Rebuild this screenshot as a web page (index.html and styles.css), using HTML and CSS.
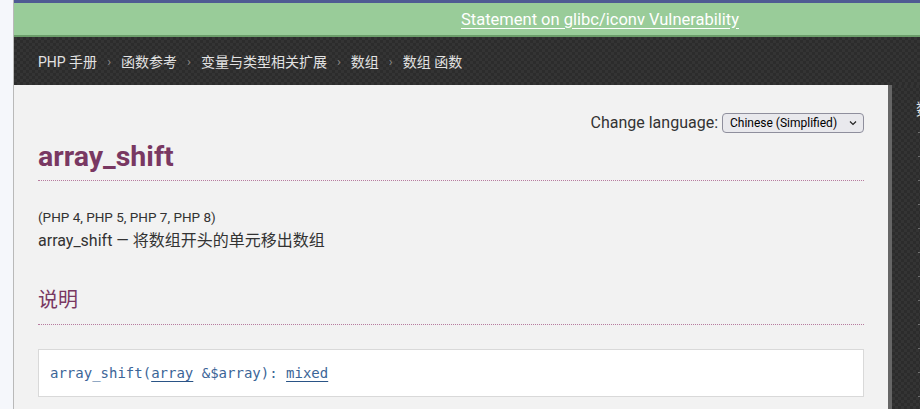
FILE: index.html
```html
<!DOCTYPE html>
<html lang="zh-CN">
<head>
<meta charset="utf-8">
<title>PHP: array_shift - Manual</title>
<link rel="stylesheet" href="styles.css">
</head>
<body>
<div class="strip"></div>
<div class="page">
  <div class="topbar"></div>
  <div class="notice"><a href="#">Statement on glibc/iconv Vulnerability</a></div>
  <nav class="crumbs">
    <a href="#">PHP 手册</a><span class="sep">›</span>
    <a href="#">函数参考</a><span class="sep">›</span>
    <a href="#">变量与类型相关扩展</a><span class="sep">›</span>
    <a href="#">数组</a><span class="sep">›</span>
    <a href="#">数组 函数</a>
  </nav>
  <div class="layout">
    <main class="content">
      <div class="lang">
        <label class="lang-label" for="lang">Change language:</label>
        <span class="select-wrap">
          <select id="lang" class="lang-select">
            <option>English</option>
            <option>German</option>
            <option>Spanish</option>
            <option>French</option>
            <option>Italian</option>
            <option>Japanese</option>
            <option>Brazilian Portuguese</option>
            <option>Russian</option>
            <option>Turkish</option>
            <option>Ukrainian</option>
            <option selected>Chinese (Simplified)</option>
            <option>Other</option>
          </select>
          <svg class="chev" width="8" height="6" viewBox="0 0 8 6"><path d="M1 1.5 L4 4.5 L7 1.5" fill="none" stroke="#222" stroke-width="1.2"/></svg>
        </span>
      </div>
      <h1 class="title">array_shift</h1>
      <p class="verinfo">(PHP 4, PHP 5, PHP 7, PHP 8)</p>
      <p class="refpurpose">array_shift — 将数组开头的单元移出数组</p>
      <h2 class="section">说明</h2>
      <div class="methodsynopsis"><span class="mname">array_shift</span>(<a href="#" class="type">array</a> <span class="param">&amp;$array</span>): <a href="#" class="type">mixed</a></div>
    </main>
    <aside class="sidebar">
      <div class="side-title">数组 函数</div>
      <ul class="side-list">
        <li>array_change_key_case</li>
        <li>array_chunk</li>
        <li>array_column</li>
        <li>array_combine</li>
        <li>array_count_values</li>
        <li>array_diff_assoc</li>
        <li>array_diff_key</li>
        <li>array_diff_uassoc</li>
        <li>array_diff_ukey</li>
        <li>array_diff</li>
        <li>array_fill_keys</li>
        <li>array_fill</li>
        <li>array_filter</li>
      </ul>
    </aside>
  </div>
</div>
</body>
</html>
```
FILE: styles.css
```css
* { box-sizing: border-box; }

html, body {
  margin: 0;
  padding: 0;
}

body {
  width: 920px;
  height: 409px;
  overflow: hidden;
  display: flex;
  background: #f2f2f2;
  font-family: Roboto, "Noto Sans CJK SC", sans-serif;
  color: #333;
}

.strip {
  flex: 0 0 14px;
  background: #f5f7fb;
  border-right: 1px solid #b9b9b9;
}

.page {
  flex: 0 0 906px;
  display: flex;
  flex-direction: column;
  overflow: hidden;
}

.topbar {
  height: 3px;
  background: #4f5b93;
}

.notice {
  height: 34px;
  background: #99cc99;
  border-bottom: 2px solid #6b9d6a;
  display: flex;
  justify-content: center;
  align-items: center;
  padding-left: 266px;
  font-size: 16.5px;
}

.notice a {
  color: #fff;
  text-decoration: underline;
  text-underline-offset: 3px;
}

.crumbs {
  height: 48px;
  display: flex;
  align-items: center;
  padding-left: 24px;
  font-size: 14px;
  background: conic-gradient(#2c2c2c 25%, #343434 0 50%, #2c2c2c 0 75%, #343434 0) 0 0 / 6px 6px;
}

.crumbs a {
  color: #e2e2e2;
  text-decoration: none;
}

.crumbs .sep {
  color: #8a8a8a;
  font-size: 13px;
  padding: 0 10px;
}

.layout {
  flex: 1;
  display: flex;
  min-height: 0;
}

.content {
  flex: 0 0 878px;
  background: #f2f2f2;
  border-right: 4px solid #666;
  padding: 28px 24px 0;
}

.lang {
  display: flex;
  justify-content: flex-end;
  align-items: center;
  gap: 4px;
  height: 20px;
}

.lang-label {
  font-size: 16px;
  line-height: 20px;
  color: #333;
}

.select-wrap {
  position: relative;
  display: block;
}

.lang-select {
  appearance: none;
  -webkit-appearance: none;
  display: block;
  width: 142px;
  height: 20px;
  margin: 0;
  padding: 0 0 0 7px;
  font-family: Roboto, sans-serif;
  font-size: 12px;
  color: #000;
  background: #e9e9ed;
  border: 1px solid #8f8f9d;
  border-radius: 4px;
}

.chev {
  position: absolute;
  right: 7px;
  top: 7px;
  pointer-events: none;
}

.title {
  margin: 4px 0 0;
  padding-bottom: 3px;
  font-size: 28.5px;
  line-height: 40px;
  font-weight: bold;
  color: #793862;
  border-bottom: 1px dotted #b77c9f;
}

.verinfo {
  margin: 25px 0 0;
  font-size: 13.5px;
  line-height: 22px;
}

.refpurpose {
  margin: 1px 0 0;
  font-size: 16px;
  line-height: 24px;
}

.section {
  margin: 33px 0 0;
  padding-bottom: 10px;
  font-size: 20px;
  line-height: 28px;
  font-weight: normal;
  color: #793862;
  border-bottom: 1px dotted #b77c9f;
}

.methodsynopsis {
  margin-top: 24px;
  height: 48px;
  padding: 0 11px;
  background: #fff;
  border: 1px solid #d9d9d9;
  font-family: "DejaVu Sans Mono", monospace;
  font-size: 14px;
  line-height: 46px;
  color: #3b6597;
  white-space: nowrap;
}

.methodsynopsis .type {
  color: #3b6597;
  text-decoration: underline;
  text-decoration-color: #2a5486;
  text-underline-offset: 3px;
}

.sidebar {
  flex: 1;
  overflow: hidden;
  white-space: nowrap;
  padding: 13px 0 0 24px;
  color: #e6e6e6;
  background: conic-gradient(#2c2c2c 25%, #343434 0 50%, #2c2c2c 0 75%, #343434 0) 0 0 / 6px 6px;
}

.side-title {
  width: 220px;
  font-size: 16px;
  line-height: 24px;
  padding-bottom: 10px;
}

.side-list {
  list-style: none;
  margin: 0 0 0 2px;
  padding: 0;
  width: 220px;
  border-top: 1px dotted #6f6f6f;
}

.side-list li {
  font-size: 14px;
  line-height: 23px;
  padding-left: 6px;
  border-bottom: 1px dotted #6f6f6f;
}
```
